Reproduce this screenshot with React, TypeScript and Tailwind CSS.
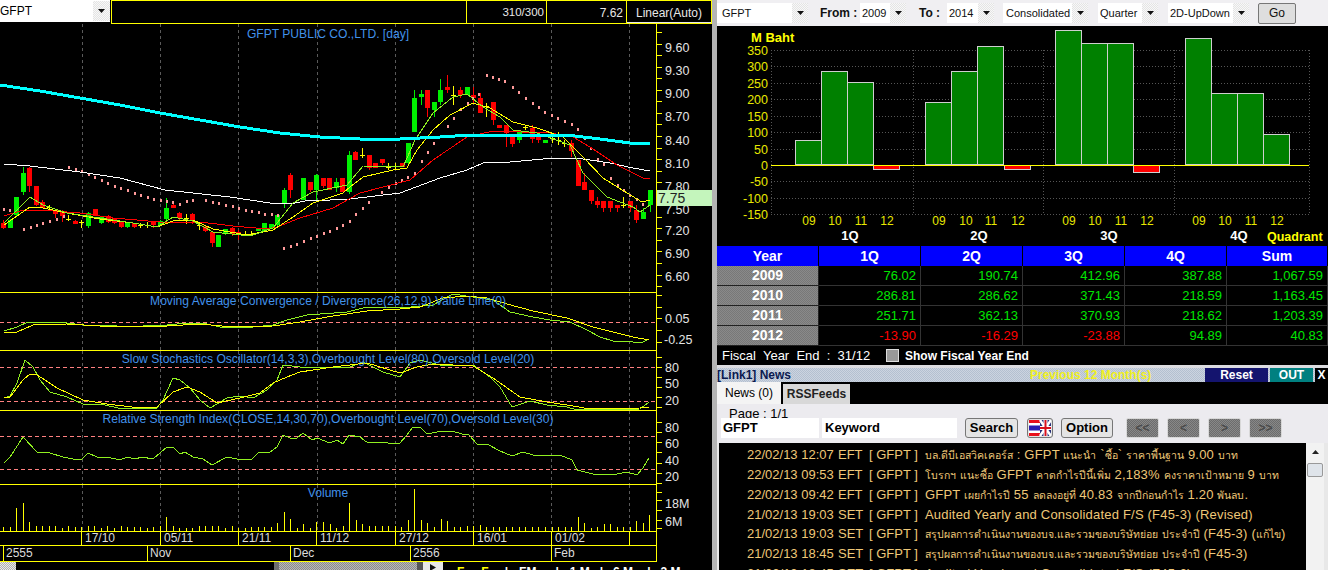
import React from 'react'

type Pt = [number, number]
type Candle = [number, number, number, number, number, string]

const GRID_X = [82, 160, 238, 317, 395, 473, 551, 629]

const CYAN: Pt[] = [[0, 85], [40, 91], [80, 98], [120, 105], [160, 113], [200, 120], [240, 127], [280, 133], [320, 137], [360, 139], [400, 139], [440, 137], [470, 135], [560, 135], [575, 136], [600, 139], [630, 143], [650, 144]]
const WHITE: Pt[] = [[4, 164], [30, 166], [80, 172], [120, 178], [165, 190], [230, 197], [270, 203], [290, 204], [310, 200], [330, 200], [350, 199], [400, 193], [440, 178], [467, 170], [483, 163], [510, 162], [543, 159], [577, 158], [583, 159], [610, 163], [633, 168], [650, 171]]
const RED: Pt[] = [[4, 216], [20, 211], [40, 210], [80, 213], [113, 218], [160, 222], [200, 222], [233, 226], [267, 229], [277, 227], [300, 218], [333, 208], [360, 193], [410, 180], [433, 160], [467, 137], [493, 131], [550, 133], [573, 137], [590, 147], [617, 165], [643, 178], [650, 179]]
const YELLOW: Pt[] = [[4, 225], [30, 207], [43, 208], [67, 213], [100, 219], [133, 223], [157, 227], [173, 221], [193, 220], [213, 229], [247, 235], [273, 230], [293, 217], [313, 203], [343, 193], [350, 187], [363, 177], [393, 170], [407, 168], [417, 150], [433, 130], [450, 115], [473, 103], [490, 108], [513, 122], [537, 128], [563, 137], [583, 157], [603, 178], [627, 193], [642, 202], [650, 200]]
const LIME: Pt[] = [[4, 223], [30, 197], [43, 205], [67, 213], [100, 218], [133, 223], [157, 227], [173, 217], [193, 221], [213, 232], [250, 236], [273, 228], [293, 203], [313, 192], [347, 185], [363, 166], [403, 167], [415, 140], [433, 113], [453, 97], [467, 94], [483, 107], [500, 117], [513, 130], [537, 133], [570, 145], [583, 173], [607, 197], [633, 207], [640, 212], [650, 205]]

const DOTS: Pt[] = [
  [3, 208], [9, 209], [23, 228], [30, 226], [36, 224], [42, 222], [49, 220], [56, 218], [63, 215],
  [68, 166], [75, 168], [81, 170], [88, 173], [94, 176], [101, 179], [107, 182], [114, 185], [120, 187], [127, 189],
  [134, 192], [140, 194], [147, 196], [153, 198], [160, 199], [166, 200], [172, 201], [179, 203], [186, 200], [192, 199],
  [205, 199], [212, 201], [218, 202], [225, 204], [232, 205], [238, 207], [245, 209], [251, 210], [258, 211], [264, 213], [271, 213], [277, 214],
  [283, 247], [290, 245], [296, 243], [303, 240], [310, 237], [316, 235], [323, 232], [329, 230], [336, 227], [342, 224], [349, 220], [355, 213], [362, 207], [368, 201], [381, 191], [388, 186], [395, 182], [401, 179], [407, 176], [414, 172], [421, 160], [427, 151], [433, 142], [440, 135], [447, 125], [453, 117], [460, 108], [467, 102], [472, 97], [478, 93],
  [486, 74], [492, 76], [498, 78], [504, 80], [512, 86], [518, 91], [525, 97], [532, 102], [538, 106], [544, 111], [551, 114], [557, 117], [564, 120], [571, 123], [577, 128], [584, 137], [590, 147], [597, 158], [603, 163], [610, 177], [617, 184], [623, 189], [629, 194], [636, 198], [642, 203],
]

const CANDLES: Candle[] = [
  [3, 220, 223, 228, 229, 'r'], [10, 219, 220, 228, 228, 'g'], [16, 197, 197, 215, 217, 'g'], [23, 167, 173, 192, 195, 'g'], [29, 167, 168, 186, 192, 'r'], [36, 186, 186, 205, 206, 'r'], [42, 200, 202, 208, 208, 'r'],
  [49, 205, 207, 207, 210, 'y'], [55, 210, 210, 214, 218, 'r'], [62, 210, 212, 216, 222, 'r'], [68, 215, 219, 219, 221, 'y'], [75, 220, 221, 224, 224, 'r'], [81, 220, 222, 222, 228, 'y'], [88, 212, 213, 226, 228, 'g'], [95, 209, 209, 216, 216, 'r'], [101, 217, 217, 223, 224, 'g'], [108, 215, 216, 222, 223, 'r'], [114, 218, 218, 223, 224, 'r'], [121, 221, 221, 227, 228, 'r'], [127, 222, 223, 227, 228, 'g'], [134, 223, 223, 227, 228, 'r'], [140, 223, 225, 225, 228, 'y'], [147, 222, 225, 225, 228, 'y'], [153, 221, 222, 225, 228, 'r'], [160, 220, 221, 225, 226, 'g'],
  [166, 198, 208, 219, 222, 'g'], [173, 202, 205, 208, 208, 'r'], [179, 212, 213, 218, 220, 'r'], [186, 214, 218, 218, 224, 'y'], [192, 213, 214, 220, 224, 'r'], [199, 222, 225, 225, 230, 'y'], [205, 226, 227, 231, 232, 'r'], [212, 231, 232, 243, 247, 'r'], [218, 235, 235, 247, 247, 'g'], [225, 229, 229, 234, 235, 'g'], [232, 227, 228, 234, 236, 'r'], [238, 230, 232, 235, 240, 'r'], [245, 231, 234, 234, 236, 'y'], [251, 231, 234, 234, 236, 'y'], [258, 228, 228, 231, 231, 'g'], [264, 223, 223, 231, 231, 'g'], [271, 224, 224, 228, 229, 'g'], [277, 215, 215, 225, 226, 'g'],
  [284, 188, 190, 203, 208, 'g'], [290, 173, 175, 190, 198, 'r'], [303, 178, 178, 200, 200, 'g'], [310, 182, 182, 190, 192, 'r'], [316, 174, 175, 190, 200, 'g'], [323, 178, 178, 186, 188, 'r'], [329, 178, 178, 190, 190, 'r'], [336, 178, 182, 188, 192, 'g'], [342, 178, 178, 192, 192, 'r'], [349, 151, 155, 192, 194, 'g'],
  [355, 151, 152, 160, 160, 'r'], [362, 148, 155, 155, 158, 'y'], [369, 155, 155, 168, 170, 'r'], [375, 163, 163, 168, 168, 'r'], [382, 159, 159, 163, 165, 'r'], [388, 163, 167, 167, 170, 'y'], [395, 163, 166, 166, 170, 'y'], [402, 163, 163, 167, 167, 'r'], [408, 143, 143, 163, 165, 'g'], [414, 90, 98, 132, 132, 'g'], [421, 90, 94, 97, 105, 'g'], [427, 90, 90, 108, 117, 'r'], [434, 102, 102, 110, 117, 'g'], [440, 79, 90, 102, 105, 'g'], [447, 75, 87, 90, 93, 'r'], [453, 86, 95, 95, 105, 'y'], [460, 87, 90, 95, 98, 'r'], [467, 87, 87, 95, 95, 'g'], [473, 87, 95, 98, 103, 'r'], [480, 93, 98, 113, 113, 'r'], [486, 103, 106, 106, 117, 'y'], [493, 102, 102, 120, 125, 'r'], [499, 125, 125, 128, 128, 'r'], [506, 125, 125, 133, 147, 'r'], [512, 136, 136, 144, 147, 'r'], [519, 132, 132, 140, 143, 'g'], [525, 125, 127, 127, 130, 'y'], [532, 125, 128, 139, 143, 'r'], [538, 137, 137, 140, 143, 'r'], [545, 140, 140, 143, 143, 'g'], [552, 133, 138, 138, 143, 'y'], [558, 132, 140, 140, 145, 'y'], [564, 140, 143, 143, 147, 'y'], [571, 140, 143, 151, 157, 'r'], [578, 160, 160, 186, 186, 'r'], [584, 173, 182, 190, 190, 'r'], [591, 190, 190, 201, 204, 'r'], [597, 197, 201, 205, 208, 'r'], [603, 201, 201, 208, 212, 'r'], [610, 201, 201, 208, 212, 'r'], [617, 205, 205, 208, 212, 'r'], [623, 197, 205, 205, 208, 'y'], [630, 201, 201, 208, 212, 'r'], [636, 205, 210, 220, 223, 'r'], [643, 208, 212, 219, 219, 'g'], [650, 190, 190, 205, 212, 'g'],
]

const MACD_LIME: Pt[] = [[4, 331], [17, 327], [28, 322], [53, 322], [67, 323], [83, 325], [117, 326], [143, 326], [167, 325], [187, 323], [207, 324], [220, 327], [253, 327], [273, 325], [287, 320], [307, 315], [347, 312], [367, 307], [400, 308], [433, 305], [453, 294], [473, 297], [493, 300], [510, 312], [533, 317], [550, 320], [570, 322], [587, 330], [600, 337], [613, 341], [633, 342], [643, 342], [649, 339]]
const MACD_YELLOW: Pt[] = [[4, 332], [17, 332], [33, 325], [67, 324], [100, 326], [167, 326], [200, 324], [233, 327], [273, 326], [300, 322], [333, 316], [367, 311], [400, 309], [420, 307], [443, 298], [467, 296], [487, 298], [507, 304], [533, 311], [567, 318], [593, 327], [617, 333], [633, 337], [649, 340]]
const STOCH_LIME: Pt[] = [[4, 398], [10, 396], [17, 383], [25, 360], [33, 367], [40, 380], [50, 392], [67, 397], [83, 404], [100, 404], [123, 409], [157, 408], [163, 400], [173, 378], [180, 380], [190, 388], [200, 400], [210, 408], [227, 398], [240, 396], [253, 398], [267, 390], [277, 380], [283, 365], [300, 367], [350, 367], [363, 362], [383, 372], [400, 377], [410, 363], [420, 360], [440, 365], [473, 365], [490, 377], [500, 387], [512, 407], [530, 401], [547, 405], [567, 407], [577, 410], [640, 409], [649, 402]]
const STOCH_YELLOW: Pt[] = [[4, 398], [10, 397], [23, 380], [30, 374], [37, 375], [45, 380], [57, 388], [83, 400], [107, 404], [140, 408], [157, 407], [173, 392], [187, 387], [200, 392], [217, 403], [240, 398], [260, 393], [273, 383], [287, 377], [300, 372], [333, 367], [367, 363], [400, 373], [417, 367], [433, 364], [473, 366], [493, 378], [520, 397], [547, 402], [573, 406], [590, 409], [640, 408], [649, 407]]
const RSI: Pt[] = [[4, 463], [10, 457], [23, 437], [37, 452], [50, 453], [63, 457], [73, 459], [82, 459], [88, 453], [97, 457], [107, 457], [120, 460], [127, 457], [135, 459], [142, 457], [153, 459], [167, 447], [173, 447], [180, 454], [185, 452], [193, 457], [203, 459], [212, 465], [227, 457], [237, 459], [252, 459], [258, 453], [270, 452], [277, 447], [283, 435], [290, 438], [297, 438], [303, 433], [312, 440], [317, 438], [330, 443], [337, 440], [343, 444], [349, 435], [360, 437], [368, 443], [380, 442], [388, 443], [400, 443], [407, 435], [413, 427], [420, 427], [427, 434], [437, 432], [452, 431], [462, 434], [468, 434], [478, 445], [487, 444], [500, 451], [512, 456], [523, 452], [533, 455], [560, 455], [572, 460], [577, 470], [593, 474], [617, 474], [627, 472], [637, 475], [643, 468], [649, 458]]

const VOLUME = [4, 4, 23, 28, 9, 5, 5, 5, 5, 3, 5, 4, 4, 5, 5, 3, 5, 3, 5, 4, 4, 4, 3, 4, 5, 14, 5, 3, 3, 3, 5, 5, 5, 5, 3, 5, 3, 3, 4, 4, 4, 4, 8, 19, 12, 3, 7, 3, 9, 9, 7, 3, 5, 28, 11, 7, 5, 5, 5, 5, 5, 4, 11, 42, 11, 8, 4, 12, 10, 4, 4, 5, 5, 6, 4, 4, 4, 4, 4, 4, 4, 4, 4, 4, 4, 4, 4, 4, 14, 8, 3, 4, 7, 7, 4, 4, 4, 10, 8, 16]

const pts = (p: Pt[]) => p.map(([x, y]) => `${x},${y}`).join(' ')

const Line = ({ p, color, width = 1 }: { p: Pt[]; color: string; width?: number }) => (
  <polyline points={pts(p)} fill="none" stroke={color} strokeWidth={width} />
)

const GridLines = ({ top, bottom }: { top: number; bottom: number }) => (
  <>
    {GRID_X.map(x => (
      <line key={x} x1={x + 0.5} x2={x + 0.5} y1={top} y2={bottom} stroke="#5a5a5a" strokeDasharray="3 3" />
    ))}
  </>
)

const Dashed = ({ y }: { y: number }) => (
  <line x1={0} x2={656} y1={y + 0.5} y2={y + 0.5} stroke="#ff8080" strokeDasharray="4 3" />
)

function Pane({ top, height, className, title, children, labels, ticks, titleClass }: {
  top: number
  height: number
  className: string
  title?: string
  titleClass?: string
  children: React.ReactNode
  labels: [string, number, number?][]
  ticks: number[]
}) {
  return (
    <div className={`flex flex-none ${className}`}>
      <div className="relative w-[657px] flex-none border-b border-r border-[#ffff00]">
        <svg width={656} height={height} viewBox={`0 ${top} 656 ${height}`} shapeRendering="crispEdges" className="block">
          <GridLines top={top} bottom={top + height} />
          {children}
        </svg>
        {title && (
          <div className={`absolute inset-x-0 text-center text-[12.1px] leading-[14px] text-[#4292ea] whitespace-nowrap ${titleClass}`}>{title}</div>
        )}
      </div>
      <svg width={55} height={height + 1} viewBox={`657 ${top} 55 ${height + 1}`} className="block flex-none">
        {ticks.map(y => (
          <line key={y} x1={657} x2={662} y1={y + 0.5} y2={y + 0.5} stroke="#ffff00" shapeRendering="crispEdges" />
        ))}
        {labels.map(([t, y, x]) => (
          <text key={t} x={x ?? 665} y={y + 5} fontSize={12.5} fill="#e4e4e4">{t}</text>
        ))}
      </svg>
    </div>
  )
}

function PricePane() {
  const ticks = Array.from({ length: 23 }, (_, k) => Math.round(32 + 11.55 * k))
  return (
    <div className="relative flex-none">
      <Pane
        top={24}
        height={268}
        className="h-[269px]"
        title="GFPT PUBLIC CO.,LTD. [day]"
        titleClass="top-[3px]"
        ticks={ticks}
        labels={[['9.60', 47], ['9.30', 70], ['9.00', 93], ['8.70', 116], ['8.40', 140], ['8.10', 163], ['7.80', 186], ['7.50', 209], ['7.20', 230], ['6.90', 253], ['6.60', 276]]}
      >
        {CANDLES.map(([x, wt, bt, bb, wb, c]) => {
          const col = c === 'r' ? '#ff0000' : c === 'g' ? '#00f000' : '#ffff00'
          return (
            <g key={x}>
              <line x1={x + 0.5} x2={x + 0.5} y1={wt} y2={wb} stroke={col} />
              {c === 'y'
                ? <line x1={x - 2} x2={x + 3} y1={bt + 0.5} y2={bt + 0.5} stroke={col} />
                : <rect x={x - 2} y={bt} width={5} height={bb - bt} fill={col} />}
            </g>
          )
        })}
        {DOTS.map(([x, y]) => <rect key={`${x}-${y}`} x={x} y={y} width={2} height={3} fill="#ff9a9a" />)}
        <Line p={WHITE} color="#ffffff" />
        <Line p={RED} color="#ff0000" />
        <Line p={YELLOW} color="#ffff00" />
        <Line p={LIME} color="#90f020" />
        <Line p={CYAN} color="#00ffff" width={3} />
      </Pane>
      <div className="absolute left-[657px] top-[166px] flex h-4 w-[55px] items-center bg-[#c4f5bc] pl-px text-[14px] text-[#222]">7.75</div>
    </div>
  )
}

const DATE_CELLS: [string, string][] = [['', 'w-[81px]'], ['17/10', 'w-[79px]'], ['05/11', 'w-[78px]'], ['21/11', 'w-[78px]'], ['11/12', 'w-[79px]'], ['27/12', 'w-[78px]'], ['16/01', 'w-[78px]'], ['01/02', 'w-[78px]'], ['', 'w-[28px]']]
const YEAR_CELLS: [string, string][] = [['', 'w-[3px]'], ['2555', 'w-[144px]'], ['Nov', 'w-[143px]'], ['Dec', 'w-[120px]'], ['2556', 'w-[141px]'], ['Feb', 'w-[106px]']]

function ChartPanel() {
  return (
    <div className="flex w-[712px] flex-none flex-col">
      <div className="flex h-6 flex-none items-start">
        <div className="flex h-[22px] w-[110px] flex-none items-center justify-between bg-white">
          <span className="text-[12px] text-black">GFPT</span>
          <DropBtn className="h-[20px] w-[17px]" />
        </div>
        <div className="ml-px flex h-6 flex-1 border border-[#ffff00] text-[12px] text-[#e8e8e8]">
          <div className="w-[355px] border-r border-[#ffff00]" />
          <div className="w-[80px] border-r border-[#ffff00] pr-[2px] pt-[3px] text-right text-[11.5px]">310/300</div>
          <div className="w-[80px] border-r border-[#ffff00] pr-[3px] pt-[3px] text-right">7.62</div>
          <div className="flex-1 border-b border-[#e8e8e8] pt-[3px] text-center">Linear(Auto)</div>
        </div>
      </div>
      <PricePane />
      <Pane top={293} height={57} className="h-[58px]" title="Moving Average Convergence / Divergence(26,12,9),Value Line(0)" titleClass="top-[1px]"
        ticks={[295, 307, 318, 330, 342]} labels={[['0.05', 318], ['-0.25', 339, 664]]}>
        <Dashed y={322} />
        <Line p={MACD_LIME} color="#90f020" />
        <Line p={MACD_YELLOW} color="#ffff00" />
      </Pane>
      <Pane top={351} height={59} className="h-[60px]" title="Slow Stochastics Oscillator(14,3,3),Overbought Level(80),Oversold Level(20)" titleClass="top-px"
        ticks={[357, 367, 377, 387, 397, 407]} labels={[['80', 367], ['50', 383], ['20', 400]]}>
        <Dashed y={367} />
        <Dashed y={401} />
        <Line p={STOCH_LIME} color="#90f020" />
        <Line p={STOCH_YELLOW} color="#ffff00" />
      </Pane>
      <Pane top={411} height={73} className="h-[74px]" title="Relative Strength Index(CLOSE,14,30,70),Overbought Level(70),Oversold Level(30)" titleClass="top-px"
        ticks={[422, 432, 442, 452, 463, 473, 483]} labels={[['80', 427], ['60', 443], ['40', 460], ['20', 476]]}>
        <Dashed y={436} />
        <Dashed y={469} />
        <Line p={RSI} color="#90f020" />
      </Pane>
      <Pane top={485} height={46} className="h-[47px]" title="Volume" titleClass="top-px"
        ticks={[492, 500, 510, 520, 528]} labels={[['18M', 503], ['6M', 521]]}>
        {VOLUME.map((h, i) => {
          const x = Math.round(3 + 6.53 * i) + 0.5
          return <line key={i} x1={x} x2={x} y1={531} y2={531 - h} stroke="#ffff00" />
        })}
      </Pane>
      <div className="flex h-[14px] w-[657px] flex-none border-b border-r border-[#ffff00] text-[12px] leading-[13px] text-[#dcdcdc]">
        {DATE_CELLS.map(([t, w], i) => (
          <div key={i} className={`${w} flex-none ${i > 0 ? 'border-l border-[#ffff00] pl-[3px]' : ''}`}>{t}</div>
        ))}
      </div>
      <div className="flex h-[16px] w-[657px] flex-none border-b border-r border-[#ffff00] text-[12px] leading-[15px] text-[#dcdcdc]">
        {YEAR_CELLS.map(([t, w], i) => (
          <div key={i} className={`${w} flex-none ${i > 0 ? 'border-l border-[#ffff00] pl-[2px]' : ''}`}>{t}</div>
        ))}
      </div>
      <div className="flex h-[9px] flex-none items-start overflow-hidden">
        <div className="h-full w-4 flex-none bg-[repeating-conic-gradient(#b0b0b0_0_25%,#e8e8e8_0_50%)] bg-[length:2px_2px]" />
        <div className="w-[258px] flex-none" />
        <div className="h-full w-[5px] flex-none bg-[#707070]" />
        <div className="h-full w-[138px] flex-none bg-[repeating-conic-gradient(#8c8c8c_0_25%,#b8b8b8_0_50%)] bg-[length:2px_2px]" />
        <div className="h-full w-[6px] flex-none bg-[#555]" />
        <div className="flex h-full w-5 flex-none justify-center bg-[#e8e8e8] pt-[2px]">
          <svg width={6} height={7} viewBox="0 0 6 7"><polygon points="0,0 6,3.5 0,7" fill="#111" /></svg>
        </div>
        <div className="flex pt-[4px] text-[12px] font-bold leading-[12px] text-white">
          <span className="ml-[14px] text-[#ffff00]">F</span>
          <span className="ml-[17px] text-[#ffff00]">F</span>
          <span className="ml-[16px]">|</span>
          <span className="ml-[11px]">FM</span>
          <span className="ml-[19px]">|</span>
          <span className="ml-[11px]">1 M</span>
          <span className="ml-[10px]">|</span>
          <span className="ml-[10px]">6 M</span>
          <span className="ml-[14px]">|</span>
          <span className="ml-[10px]">3 M</span>
        </div>
      </div>
    </div>
  )
}

function DropBtn({ className }: { className: string }) {
  return (
    <div className={`flex flex-none items-center justify-center bg-[repeating-conic-gradient(#e4e4e4_0_25%,#f8f8f8_0_50%)] bg-[length:2px_2px] ${className}`}>
      <svg width={7} height={4} viewBox="0 0 7 4"><polygon points="0,0 7,0 3.5,4" fill="#111" /></svg>
    </div>
  )
}

function Select({ label, textW, className }: { label: string; textW: string; className: string }) {
  return (
    <div className={`flex h-[20px] flex-none items-center ${className}`}>
      <div className={`flex h-full items-center overflow-hidden whitespace-nowrap bg-white text-[11px] font-normal text-[#111] ${textW}`}>{label}</div>
      <DropBtn className="h-full w-[16px]" />
    </div>
  )
}

const Y_LABELS: [string, number][] = [['350', 50], ['300', 66], ['250', 83], ['200', 99], ['150', 116], ['100', 132], ['50', 149], ['0', 165], ['-50', 181], ['-100', 198], ['-150', 214]]
const BARS: [number, number][] = [
  [795, 140], [821, 71], [847, 82], [925, 102], [951, 71], [977, 46], [1055, 30], [1081, 43], [1107, 43], [1185, 38], [1211, 93], [1237, 93], [1263, 134],
]
const NEG: [number, number][] = [[873, 169], [1004, 169], [1133, 172]]
const X_LABELS: [string, number][] = [['09', 809], ['10', 835], ['11', 861], ['12', 887], ['09', 939], ['10', 966], ['11', 991], ['12', 1018], ['09', 1069], ['10', 1095], ['11', 1121], ['12', 1147], ['09', 1199], ['10', 1225], ['11', 1251], ['12', 1277]]

function BarChart() {
  return (
    <svg width={611} height={220} viewBox="717 26 611 220" className="block flex-none">
      <g shapeRendering="crispEdges">
        {Y_LABELS.map(([, y]) => y !== 165 && <line key={y} x1={771} x2={1309} y1={y + 0.5} y2={y + 0.5} stroke="#555" strokeDasharray="1 2" />)}
        {[771, 913, 1043, 1174, 1309].map(x => <line key={x} x1={x + 0.5} x2={x + 0.5} y1={50} y2={214} stroke="#555" strokeDasharray="1 2" />)}
        {BARS.map(([x, y]) => <rect key={x} x={x + 0.5} y={y + 0.5} width={26} height={164 - y} fill="#008000" stroke="#cfcfcf" />)}
        {NEG.map(([x, b]) => <rect key={x} x={x + 0.5} y={165.5} width={26} height={b - 165} fill="#ff0000" stroke="#cfcfcf" />)}
        <line x1={771} x2={1309} y1={165.5} y2={165.5} stroke="#ffff00" />
      </g>
      <text x={751} y={42} fontSize={13} fontWeight="bold" fill="#ffff00">M Baht</text>
      {Y_LABELS.map(([t, y]) => <text key={t} x={768} y={y + 5} fontSize={12.5} fill="#e8e800" textAnchor="end">{t}</text>)}
      {X_LABELS.map(([t, x], i) => <text key={i} x={x} y={225} fontSize={12} fill="#e8e800" textAnchor="middle">{t}</text>)}
      {([['1Q', 850], ['2Q', 979], ['3Q', 1109], ['4Q', 1239]] as [string, number][]).map(([t, x]) => (
        <text key={t} x={x} y={240} fontSize={13} fontWeight="bold" fill="#ffffff" textAnchor="middle">{t}</text>
      ))}
      <text x={1267} y={241} fontSize={12.5} fontWeight="bold" fill="#ffff00">Quadrant</text>
    </svg>
  )
}

const ROWS: [string, string[]][] = [
  ['2009', ['76.02', '190.74', '412.96', '387.88', '1,067.59']],
  ['2010', ['286.81', '286.62', '371.43', '218.59', '1,163.45']],
  ['2011', ['251.71', '362.13', '370.93', '218.62', '1,203.39']],
  ['2012', ['-13.90', '-16.29', '-23.88', '94.89', '40.83']],
]

function FinTable() {
  return (
    <div className="grid flex-none grid-cols-[102px_102px_102px_102px_102px_101px] auto-rows-[20px] text-[13px]">
      {['Year', '1Q', '2Q', '3Q', '4Q', 'Sum'].map(h => (
        <div key={h} className="flex items-center justify-center border-r border-[#000] bg-[#0000ff] text-[14px] font-bold text-white">{h}</div>
      ))}
      {ROWS.map(([y, vals]) => (
        <React.Fragment key={y}>
          <div className="flex items-center justify-center border-b border-r border-[#222] bg-[repeating-conic-gradient(#787878_0_25%,#8a8a8a_0_50%)] bg-[length:2px_2px] text-[14px] font-bold text-white">{y}</div>
          {vals.map((v, i) => (
            <div key={i} className={`flex items-center justify-end border-b border-r border-[#333] pr-[4px] ${v.startsWith('-') ? 'text-[#ff0000]' : 'text-[#00e600]'}`}>{v}</div>
          ))}
        </React.Fragment>
      ))}
    </div>
  )
}

function NavBtn({ label }: { label: string }) {
  return (
    <div className="flex h-[20px] w-[33px] flex-none items-center justify-center rounded-[2px] border border-[#d8d8d8] bg-[repeating-conic-gradient(#6c6c6c_0_25%,#888888_0_50%)] bg-[length:2px_2px] text-[12px] font-bold text-[#4a4a4a]">{label}</div>
  )
}

const BTN = 'flex h-[20px] flex-none items-center justify-center rounded-[3px] border border-[#777] bg-[#e4e4e4] text-[13px] font-bold text-black'

function Flag() {
  return (
    <svg width={22} height={16} viewBox="0 0 22 16">
      <rect width={11} height={16} fill="#e8101c" />
      <rect y={3} width={11} height={10} fill="#fff" />
      <rect y={5.5} width={11} height={5} fill="#2a1fb0" />
      <rect x={11} width={11} height={16} fill="#26307a" />
      <path d="M11 0 L22 16 M22 0 L11 16" stroke="#fff" strokeWidth={2.5} />
      <path d="M16.5 0 V16 M11 8 H22" stroke="#fff" strokeWidth={4} />
      <path d="M16.5 0 V16 M11 8 H22" stroke="#d8101c" strokeWidth={2} />
    </svg>
  )
}

const NEWS: [string, string, string][] = [
  ['22/02/13 12:07', 'EFT', 'บล.ดีบีเอสวิคเคอร์ส : GFPT แนะนำ `ซื้อ` ราคาพื้นฐาน 9.00 บาท'],
  ['22/02/13 09:53', 'EFT', 'โบรกฯ แนะซื้อ GFPT คาดกำไรปีนี้เพิ่ม 2,183% คงราคาเป้าหมาย 9 บาท'],
  ['22/02/13 09:42', 'EFT', 'GFPT เผยกำไรปี 55 ลดลงอยู่ที่ 40.83 จากปีก่อนกำไร 1.20 พันลบ.'],
  ['21/02/13 19:03', 'SET', 'Audited Yearly and Consolidated F/S (F45-3) (Revised)'],
  ['21/02/13 19:03', 'SET', 'สรุปผลการดำเนินงานของบจ.และรวมของบริษัทย่อย ประจำปี (F45-3) (แก้ไข)'],
  ['21/02/13 18:45', 'SET', 'สรุปผลการดำเนินงานของบจ.และรวมของบริษัทย่อย ประจำปี (F45-3)'],
  ['21/02/13 18:45', 'SET', 'Audited Yearly and Consolidated F/S (F45-3)'],
]

// Thai runs come out much wider than the Latin ones in this font, so they get their own size
function Headline({ text }: { text: string }) {
  return (
    <span className="text-[13px] tracking-[0.2px]">
      {text.split(/([\u0E00-\u0E7F.]*[\u0E00-\u0E7F]+)/).map((run, i) => (
        <span key={i} className={/[\u0E00-\u0E7F]/.test(run) ? 'text-[10.5px] tracking-normal' : ''}>{run}</span>
      ))}
    </span>
  )
}

function NewsPanel() {
  return (
    <div className="flex min-h-0 flex-1 flex-col">
      <div className="flex h-[14px] flex-none items-center bg-[repeating-conic-gradient(#b4c0d0_0_25%,#ccd4e0_0_50%)] bg-[length:2px_2px] text-[12px] font-bold">
        <span className="w-[313px] flex-none text-[#0a1a50]">[Link1] News</span>
        <span className="w-[175px] flex-none text-[#f0f020]">Previous 12 Month(s)</span>
        <span className="flex h-full w-[63px] flex-none items-center justify-center bg-[#14146e] text-white">Reset</span>
        <span className="ml-[2px] flex h-full w-[43px] flex-none items-center justify-center bg-[#008080] text-white">OUT</span>
        <span className="ml-[2px] flex h-full flex-1 items-center justify-center bg-black text-white">X</span>
      </div>
      <div className="flex h-[22px] flex-none items-end bg-black text-[12px]">
        <div className="flex h-[22px] w-[64px] flex-none items-center justify-center bg-[#f4f4f4] text-black">News (0)</div>
        <div className="ml-[2px] flex h-[20px] w-[67px] flex-none items-center justify-center bg-[#d8d8d8] font-bold text-[#222]">RSSFeeds</div>
      </div>
      <div className="h-[39px] flex-none bg-[#ecebef] text-black">
        <div className="h-[14px] pl-3 text-[13px] leading-[20px]">Page : 1/1</div>
        <div className="flex items-center pl-1">
          <div className="flex h-[20px] w-[98px] flex-none items-center bg-white pl-[2px] text-[13px] font-bold">GFPT</div>
          <div className="ml-[3px] flex h-[20px] w-[135px] flex-none items-center bg-white pl-[3px] text-[13px] font-bold">Keyword</div>
          <div className={`ml-2 w-[53px] ${BTN}`}>Search</div>
          <div className={`ml-[9px] w-[26px] ${BTN}`}><Flag /></div>
          <div className={`ml-2 w-[52px] ${BTN}`}>Option</div>
          <div className="ml-[13px] flex gap-2"><NavBtn label="<<" /><NavBtn label="<" /><NavBtn label=">" /><NavBtn label=">>" /></div>
        </div>
      </div>
      <div className="flex min-h-0 flex-1 overflow-hidden bg-[#e8e8e8]">
        <div className="ml-[2px] min-w-0 flex-1 bg-black pl-7 pt-[2px] text-[13px] text-[#efc878]">
          {NEWS.map(([d, src, h], i) => (
            <div key={i} className="flex h-[19.8px] items-center whitespace-nowrap">
              <span className="w-[91px] flex-none">{d}</span>
              <span className="w-[31px] flex-none">{src}</span>
              <span className="w-[56px] flex-none">[ GFPT ]</span>
              <Headline text={h} />
            </div>
          ))}
        </div>
        <div className="relative w-[18px] flex-none bg-[#f2f2f2]">
          <div className="flex h-[17px] items-center justify-center">
            <svg width={7} height={4} viewBox="0 0 7 4"><polygon points="0,4 7,4 3.5,0" fill="#222" /></svg>
          </div>
          <div className="mx-px mt-[3px] h-[14px] rounded-[2px] border border-[#999] bg-[#dfe4ea]" />
        </div>
        <div className="w-1 flex-none bg-[#e8e8e8]" />
      </div>
    </div>
  )
}

function RightPanel() {
  return (
    <div className="flex min-w-0 flex-1 flex-col">
      <div className="flex h-[26px] flex-none items-center whitespace-nowrap bg-[#f0eff2] text-[12px] font-bold text-[#111]">
        <Select label="GFPT" textW="w-[75px] pl-[5px]" className="" />
        <span className="ml-[12px] w-[40px] flex-none">From :</span>
        <Select label="2009" textW="w-[30px] pl-[2px]" className="" />
        <span className="ml-[13px] w-[28px] flex-none">To :</span>
        <Select label="2014" textW="w-[31px] pl-[2px]" className="" />
        <Select label="Consolidated" textW="w-[69px] pl-[3px]" className="ml-[9px]" />
        <Select label="Quarter" textW="w-[44px] pl-[2px]" className="ml-[10px]" />
        <Select label="2D-UpDown" textW="w-[65px] pl-[2px]" className="ml-[10px]" />
        <div className="ml-[9px] flex h-[21px] w-[38px] flex-none items-center justify-center rounded-[2px] border border-[#777] bg-[#dedede] text-[12px] font-normal">Go</div>
      </div>
      <BarChart />
      <FinTable />
      <div className="flex h-[19px] flex-none items-center text-[12px] text-white">
        <span className="ml-[5px] w-[164px] flex-none whitespace-pre text-[13px]">{'Fiscal  Year  End  :  31/12'}</span>
        <span className="h-[13px] w-[13px] flex-none border border-[#ddd] bg-[#999]" />
        <span className="ml-[6px] font-bold">Show Fiscal Year End</span>
      </div>
      <div className="h-[3px] flex-none bg-[#dcdce0]" />
      <NewsPanel />
    </div>
  )
}

export default function App() {
  return (
    <div className="flex h-[570px] w-[1328px] overflow-hidden bg-black font-['Liberation_Sans','Noto_Sans',sans-serif]">
      <ChartPanel />
      <div className="w-[5px] flex-none bg-[#b4b4b4]" />
      <RightPanel />
    </div>
  )
}
